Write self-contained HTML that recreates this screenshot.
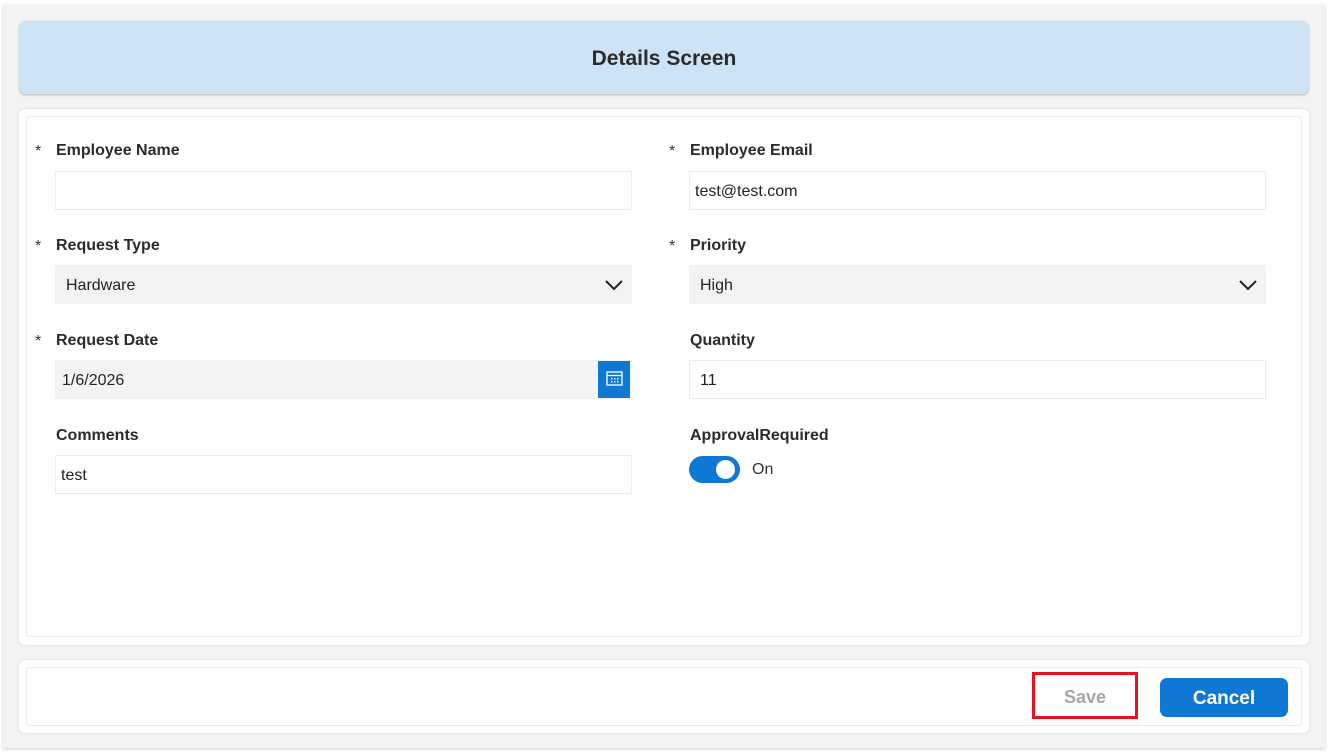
<!DOCTYPE html>
<html><head><style>
*{box-sizing:border-box;margin:0;padding:0}
body{width:1329px;height:754px;background:#fff;font-family:"Segoe UI","Liberation Sans",sans-serif;color:#333;position:relative;overflow:hidden}
.abs{position:absolute}
.outer{left:3px;top:5px;width:1322px;height:743px;background:#f3f3f3;box-shadow:0 1px 3px rgba(0,0,0,.2)}
.hdr{left:19px;top:21px;width:1290px;height:73px;background:#cde3f6;border-radius:7px;box-shadow:0 1px 2px rgba(0,0,0,.25);text-align:center;line-height:75px;font-weight:bold;font-size:21px;color:#2b2b2b}
.card{background:#fff;border-radius:6px;box-shadow:0 0 2px rgba(0,0,0,.15)}
.inner{border:1px solid #ececec;border-radius:4px;background:#fff}
.lbl{font-size:16px;font-weight:bold;color:#2b2b2b}
.star{font-size:16px;color:#333}
.in{height:39px;border:1px solid #ececec;background:#fff;font-size:16px;line-height:40px;padding-left:10px;color:#222}
.dd{background:#f3f3f3;border-color:#f3f3f3}
</style></head><body>
<div class="abs outer"></div>
<div class="abs hdr">Details Screen</div>
<div class="abs card" style="left:19px;top:109px;width:1290px;height:536px"></div>
<div class="abs inner" style="left:26px;top:116px;width:1276px;height:521px"></div>
<div class="abs card" style="left:19px;top:660px;width:1290px;height:73px"></div>
<div class="abs inner" style="left:26px;top:667px;width:1276px;height:59px"></div>

<div class="abs star" style="left:35px;top:143px">*</div><div class="abs lbl" style="left:56px;top:142px">Employee Name</div>
<div class="abs in" style="left:55px;top:171px;width:577px"></div>
<div class="abs star" style="left:669px;top:143px">*</div><div class="abs lbl" style="left:690px;top:142px">Employee Email</div>
<div class="abs in" style="left:689px;top:171px;width:577px;padding-left:5px">test@test.com</div>

<div class="abs star" style="left:35px;top:238px">*</div><div class="abs lbl" style="left:56px;top:237px">Request Type</div>
<div class="abs in dd" style="left:55px;top:265px;width:577px">Hardware</div>
<svg class="abs" style="left:604px;top:278px" width="20" height="14"><path d="M2 3 L10 11 L18 3" fill="none" stroke="#222" stroke-width="2"/></svg>
<div class="abs star" style="left:669px;top:238px">*</div><div class="abs lbl" style="left:690px;top:237px">Priority</div>
<div class="abs in dd" style="left:689px;top:265px;width:577px">High</div>
<svg class="abs" style="left:1238px;top:278px" width="20" height="14"><path d="M2 3 L10 11 L18 3" fill="none" stroke="#222" stroke-width="2"/></svg>

<div class="abs star" style="left:35px;top:333px">*</div><div class="abs lbl" style="left:56px;top:332px">Request Date</div>
<div class="abs in dd" style="left:55px;top:360px;width:577px;padding-left:6px">1/6/2026</div>
<div class="abs" style="left:598px;top:361px;width:32px;height:37px;background:#0f78d4"></div>
<svg class="abs" style="left:606px;top:371px" width="17" height="16"><rect x="1" y="1" width="15" height="13" fill="none" stroke="#fff" stroke-width="1.3"/><line x1="1" y1="4.5" x2="16" y2="4.5" stroke="#fff" stroke-width="1.3"/><g fill="#fff"><rect x="5" y="7" width="1.5" height="1.5"/><rect x="8" y="7" width="1.5" height="1.5"/><rect x="11" y="7" width="1.5" height="1.5"/><rect x="5" y="10" width="1.5" height="1.5"/><rect x="8" y="10" width="1.5" height="1.5"/><rect x="11" y="10" width="1.5" height="1.5"/></g></svg>
<div class="abs lbl" style="left:690px;top:332px">Quantity</div>
<div class="abs in" style="left:689px;top:360px;width:577px">11</div>

<div class="abs lbl" style="left:56px;top:427px">Comments</div>
<div class="abs in" style="left:55px;top:455px;width:577px;padding-left:5px">test</div>
<div class="abs lbl" style="left:690px;top:427px">ApprovalRequired</div>
<div class="abs" style="left:689px;top:456px;width:51px;height:27px;border-radius:14px;background:#0f78d4"></div>
<div class="abs" style="left:716px;top:460px;width:19px;height:19px;border-radius:50%;background:#fff"></div>
<div class="abs" style="left:752px;top:461px;font-size:16px;color:#333">On</div>

<div class="abs" style="left:1032px;top:672px;width:106px;height:47px;border:3px solid #e81123;background:#fff;text-align:center;line-height:44px;font-size:18px;font-weight:bold;color:#a6a6a6">Save</div>
<div class="abs" style="left:1160px;top:678px;width:128px;height:39px;border-radius:7px;background:#0f78d4;color:#fff;text-align:center;line-height:41px;font-size:19px;font-weight:bold">Cancel</div>
</body></html>
